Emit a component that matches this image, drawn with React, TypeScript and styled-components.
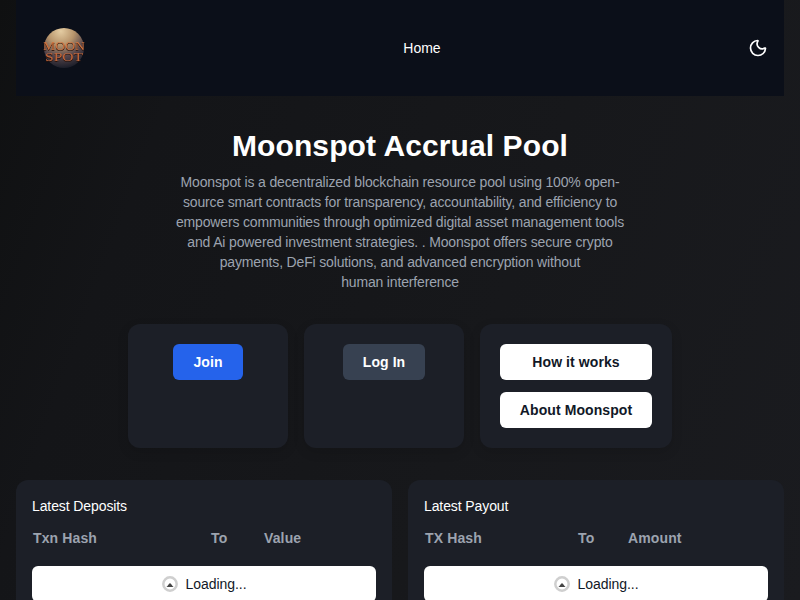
import React from "react";
import styled, { createGlobalStyle } from "styled-components";
import { Moon } from "lucide-react";

const Global = createGlobalStyle`
  html, body { margin: 0; padding: 0; height: 100%; overflow: hidden; }
  body { background: #131417; font-family: "Liberation Sans", Arial, sans-serif; }
`;
const Page = styled.div`
  width: 800px; height: 600px; overflow: hidden; box-sizing: border-box; padding: 0 16px;
  background: linear-gradient(110deg, #0f1011 0%, #141518 20%, #17181b 60%, #1a1b1f 100%);
`;
const Header = styled.header`
  height: 96px; display: grid; grid-template-columns: 1fr auto 1fr; align-items: center;
  padding: 0 16px 0 28px; background: #0b0f19;
`;
const LogoMark = styled.svg`
  display: block; overflow: visible;
`;
const LogoWord = styled.text`
  font-family: "Liberation Serif", serif; font-size: 13.5px; font-weight: 400;
  filter: drop-shadow(0 1px 0 #2a120a);
`;
const NavLink = styled.a`
  color: #fff; font-size: 14px; line-height: 20px; text-decoration: none; margin-left: 32px;
`;
const ThemeToggle = styled.button`
  justify-self: end; display: flex; padding: 0; border: 0; background: none; color: #fff;
`;
const Hero = styled.section`
  display: flex; flex-direction: column; align-items: center; text-align: center; padding-top: 32px;
`;
const Title = styled.h1`
  margin: 0; color: #fff; font-size: 30px; line-height: 36px; font-weight: 700; letter-spacing: 0.1px;
`;
const Lead = styled.p`
  margin: 8px 0 0; width: 452px; color: #9ca3af; font-size: 14px; line-height: 20px; letter-spacing: -0.16px;
`;
const Actions = styled.div`
  display: flex; justify-content: center; gap: 16px; margin-top: 32px;
`;
const ActionCard = styled.div<{ $w: number }>`
  width: ${p => p.$w}px; height: 124px; box-sizing: border-box; padding: 20px; border-radius: 12px;
  background: #1c1f27; display: flex; flex-direction: column; align-items: center; gap: 12px;
  box-shadow: 0 4px 12px rgba(0,0,0,.12);
`;
const Button = styled.button<{ $bg: string; $fg: string; $px: number; $full?: boolean }>`
  height: 36px; padding: 0 ${p => p.$px}px; border: 0; border-radius: 6px; flex: none; white-space: nowrap;
  width: ${p => (p.$full ? "100%" : "auto")}; background: ${p => p.$bg}; color: ${p => p.$fg};
  font: 700 14px/20px "Liberation Sans", Arial, sans-serif; letter-spacing: 0.08px;
`;
const Tables = styled.section`
  display: grid; grid-template-columns: 1fr 1fr; gap: 16px; margin-top: 32px;
`;
const Panel = styled.div`
  background: #1c1f27; border-radius: 12px; padding: 16px; height: 200px; box-sizing: border-box;
`;
const PanelTitle = styled.h2`
  margin: 0; color: #fff; font-size: 14px; line-height: 20px; font-weight: 400; letter-spacing: -0.1px;
`;
const ColHeads = styled.div`
  display: flex; margin-top: 12px; padding: 0 1px; height: 20px;
`;
const ColHead = styled.span<{ $w: number }>`
  width: ${p => p.$w}px; flex: none; color: #9ca3af; font-size: 14px; line-height: 20px; font-weight: 700; letter-spacing: 0.13px;
`;
const LoadingRow = styled.div`
  margin-top: 18px; height: 36px; background: #fff; border-radius: 6px;
  display: flex; align-items: center; justify-content: center; gap: 8px;
  color: #111827; font-size: 14px; line-height: 20px; letter-spacing: -0.05px;
`;
const SpinnerMark = styled.svg`
  filter: blur(0.35px);
`;
const Spinner = () => (
  <SpinnerMark width="16" height="16" viewBox="0 0 16 16" aria-hidden="true">
    <circle cx="8" cy="8" r="6.7" fill="none" stroke="#cfcfcf" strokeWidth="2.5" />
    <path d="M4.4 11 Q5.6 10.4 6.3 8.8 L8 7 L9.7 8.8 Q10.4 10.4 11.6 11 Z" fill="#454545" />
  </SpinnerMark>
);

const Logo = () => (
  <LogoMark width="40" height="40" viewBox="0 0 40 40" role="img">
    <defs>
      <radialGradient id="moonFill" cx="0.42" cy="0.08" r="0.95">
        <stop offset="0" stopColor="#e4cca2" />
        <stop offset="0.35" stopColor="#b8956c" />
        <stop offset="0.68" stopColor="#54444a" />
        <stop offset="1" stopColor="#161a26" />
      </radialGradient>
    </defs>
    <circle cx="20" cy="20" r="20" fill="url(#moonFill)" />
    <LogoWord x="-1" y="22" textLength="42" lengthAdjust="spacingAndGlyphs" fill="#cf7440">MOON</LogoWord>
    <LogoWord x="1" y="33" textLength="38" lengthAdjust="spacingAndGlyphs" fill="#c2663a">SPOT</LogoWord>
  </LogoMark>
);

const LEAD =
  "Moonspot is a decentralized blockchain resource pool using 100% open-source smart contracts for transparency, accountability, and efficiency to empowers communities through optimized digital asset management tools and Ai powered investment strategies. . Moonspot offers secure crypto payments, DeFi solutions, and advanced encryption without human\u00a0interference";

const TablePanel = ({ title, cols }: { title: string; cols: [string, number][] }) => (
  <Panel>
    <PanelTitle>{title}</PanelTitle>
    <ColHeads>{cols.map(([c, w]) => <ColHead key={c} $w={w}>{c}</ColHead>)}</ColHeads>
    <LoadingRow><Spinner />Loading...</LoadingRow>
  </Panel>
);

export default function App() {
  return (
    <Page>
      <Global />
      <Header>
        <Logo />
        <NavLink href="#">Home</NavLink>
        <ThemeToggle aria-label="Theme"><Moon size={20} strokeWidth={2} /></ThemeToggle>
      </Header>
      <Hero>
        <Title>Moonspot Accrual Pool</Title>
        <Lead>{LEAD}</Lead>
        <Actions>
          <ActionCard $w={160}><Button $bg="#2563eb" $fg="#fff" $px={20.5}>Join</Button></ActionCard>
          <ActionCard $w={160}><Button $bg="#374151" $fg="#fff" $px={20}>Log In</Button></ActionCard>
          <ActionCard $w={192}>
            <Button $bg="#fff" $fg="#111827" $px={0} $full>How it works</Button>
            <Button $bg="#fff" $fg="#111827" $px={0} $full>About Moonspot</Button>
          </ActionCard>
        </Actions>
      </Hero>
      <Tables>
        <TablePanel title="Latest Deposits" cols={[["Txn Hash", 178], ["To", 53], ["Value", 60]]} />
        <TablePanel title="Latest Payout" cols={[["TX Hash", 153], ["To", 50], ["Amount", 70]]} />
      </Tables>
    </Page>
  );
}
